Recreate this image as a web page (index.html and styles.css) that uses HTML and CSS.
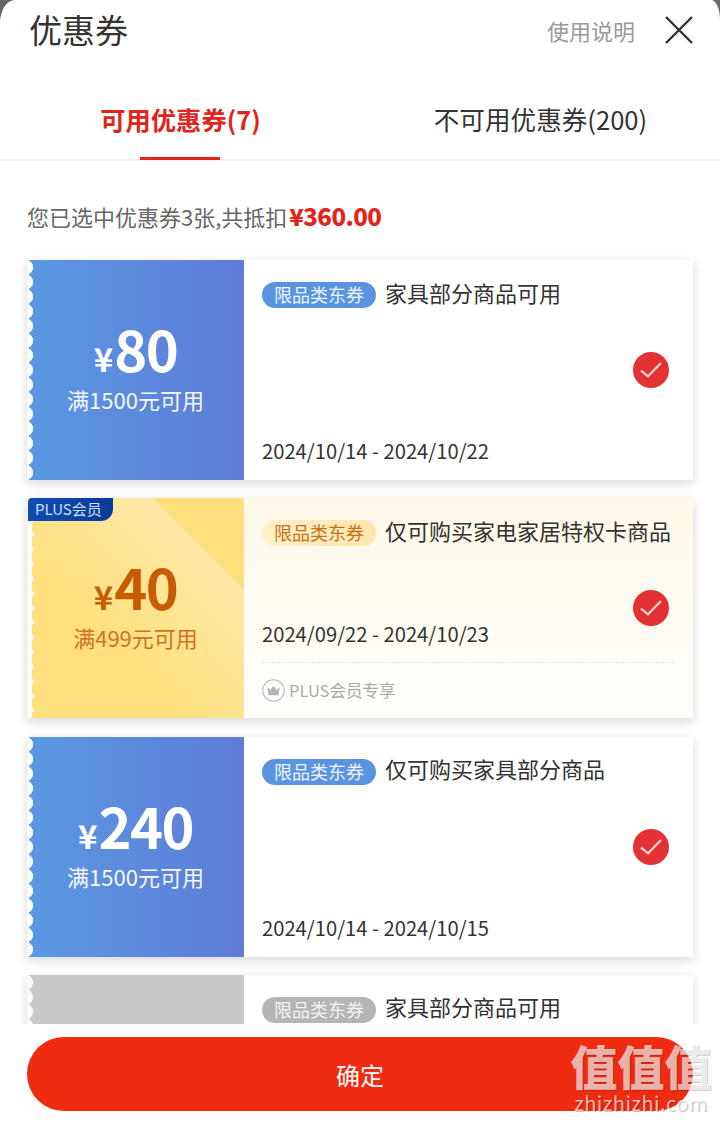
FILE: index.html
```html
<!DOCTYPE html>
<html lang="zh-CN">
<head>
<meta charset="utf-8">
<title>优惠券</title>
<link rel="stylesheet" href="styles.css">
</head>
<body>
<main class="sheet">
  <header class="header">
    <h1 class="title">优惠券</h1>
    <a class="help">使用说明</a>
    <svg class="close" viewBox="0 0 28 28" width="28" height="28"><path d="M1 1 27 27M27 1 1 27" fill="none" stroke="#333" stroke-width="2.4"/></svg>
  </header>
  <nav class="tabs">
    <div class="tab tab-active">可用优惠券(7)</div>
    <div class="tab">不可用优惠券(200)</div>
  </nav>
  <section class="list">
    <p class="summary">您已选中优惠券3张,共抵扣<strong class="summary-amount">¥360.00</strong></p>

    <article class="coupon">
      <div class="face face-blue">
        <div class="amount"><span class="yen">¥</span>80</div>
        <div class="limit">满1500元可用</div>
      </div>
      <div class="body">
        <div class="info">
          <div class="head"><span class="tag tag-blue">限品类东券</span><span class="name">家具部分商品可用</span></div>
          <div class="date">2024/10/14 - 2024/10/22</div>
        </div>
        <svg class="check" viewBox="0 0 36 36" width="36" height="36"><circle cx="18" cy="18" r="18" fill="#e33236"/><path d="M8 18.700l7 5.600L28 11" fill="none" stroke="#fbd5d5" stroke-width="2.200"/></svg>
      </div>
    </article>

    <article class="coupon coupon-plus">
      <div class="face face-gold">
        <span class="plus-badge">PLUS会员</span>
        <div class="amount"><span class="yen">¥</span>40</div>
        <div class="limit">满499元可用</div>
      </div>
      <div class="body">
        <div class="info">
          <div class="head"><span class="tag tag-gold">限品类东券</span><span class="name">仅可购买家电家居特权卡商品</span></div>
          <div class="date">2024/09/22 - 2024/10/23</div>
          <div class="plus-note">
            <svg class="crown" viewBox="0 0 22 22" width="23" height="23"><circle cx="11" cy="11" r="10.300" fill="#fff" stroke="#bbb" stroke-width="1"/><path d="M5 8l3.200 2.500L11 6.500l2.800 4L17 8l-1.300 7.500H6.300z" fill="#b5b5b5"/></svg>
            <span>PLUS会员专享</span>
          </div>
        </div>
        <svg class="check" viewBox="0 0 36 36" width="36" height="36"><circle cx="18" cy="18" r="18" fill="#e33236"/><path d="M8 18.700l7 5.600L28 11" fill="none" stroke="#fbd5d5" stroke-width="2.200"/></svg>
      </div>
    </article>

    <article class="coupon">
      <div class="face face-blue">
        <div class="amount"><span class="yen">¥</span>240</div>
        <div class="limit">满1500元可用</div>
      </div>
      <div class="body">
        <div class="info">
          <div class="head"><span class="tag tag-blue">限品类东券</span><span class="name">仅可购买家具部分商品</span></div>
          <div class="date">2024/10/14 - 2024/10/15</div>
        </div>
        <svg class="check" viewBox="0 0 36 36" width="36" height="36"><circle cx="18" cy="18" r="18" fill="#e33236"/><path d="M8 18.700l7 5.600L28 11" fill="none" stroke="#fbd5d5" stroke-width="2.200"/></svg>
      </div>
    </article>

    <article class="coupon">
      <div class="face face-gray"></div>
      <div class="body">
        <div class="info">
          <div class="head"><span class="tag tag-gray">限品类东券</span><span class="name">家具部分商品可用</span></div>
        </div>
      </div>
    </article>
  </section>
  <footer class="footer">
    <button class="confirm">确定</button>
  </footer>
  <div class="watermark">
    <div class="watermark-logo">值值值</div>
    <div class="watermark-url">zhizhizhi.com</div>
  </div>
</main>
</body>
</html>
```
FILE: styles.css
```css
* { box-sizing: border-box; }
html, body { margin: 0; height: 100%; }
body {
  background: #666;
  font-family: "Noto Sans CJK SC", "Noto Sans", sans-serif;
  color: #333;
}
.sheet {
  position: relative;
  height: 1123px;
  background: #fff;
  border-radius: 15px 9px 0 0 / 23px 20px 0 0;
  overflow: hidden;
  display: flex;
  flex-direction: column;
}
.header {
  height: 59px;
  padding: 0 27px 0 29px;
  display: flex;
  align-items: center;
  flex: none;
}
.title {
  margin: 0;
  font-size: 33px;
  font-weight: 400;
  line-height: 59px;
  color: #333;
  flex: 1;
}
.help {
  font-size: 22px;
  color: #999;
  margin-right: 30px;
}
.close { flex: none; }
.tabs {
  flex: none;
  height: 102px;
  border-bottom: 2px solid #f2f2f2;
  display: grid;
  grid-template-columns: 361px 1fr;
}
.tab {
  position: relative;
  text-align: center;
  font-size: 25.600px;
  line-height: 36px;
  padding-top: 42px;
  color: #333;
}
.tab-active {
  color: #e1251b;
  font-weight: 700;
  font-size: 25.300px;
}
.tab-active::after {
  content: "";
  position: absolute;
  left: 140px;
  bottom: -1px;
  width: 80px;
  height: 3px;
  background: #e1251b;
}
.list {
  flex: 1;
  min-height: 0;
  overflow: hidden;
  padding: 0 27px;
}
.summary {
  margin: 0;
  padding-top: 37px;
  height: 99px;
  font-size: 22px;
  line-height: 36px;
  color: #666;
}
.summary-amount {
  font-size: 24px;
  color: #e1251b;
  font-weight: 900;
  letter-spacing: -0.6px;
  margin-left: 2px;
}
.coupon {
  display: flex;
  height: 220px;
  margin-bottom: 18.330px;
  background: #fff;
  box-shadow: 0 3px 10px rgba(0, 0, 0, 0.16);
}
.coupon-plus { background: linear-gradient(#fff9ea, #fffefb); }
.face {
  position: relative;
  flex: none;
  width: 217px;
  display: flex;
  flex-direction: column;
  align-items: center;
  padding-top: 60px;
}
.face::before {
  content: "";
  position: absolute;
  left: 0;
  top: 0;
  bottom: 0;
  width: 7px;
  background: radial-gradient(circle at -1.700px 50%, #fbfaf4 7.600px, transparent 8px) 0 0 / 7px 14.670px repeat-y;
}
.face-blue { background: linear-gradient(90deg, #5a98e2, #5f7cd6); color: #fff; }
.face-gray { background: #c9c9c9; }
.face-gold {
  background: linear-gradient(45deg, #fee07f 0, #fee07f 110px, #fee9a6 244px, #fedf7c 244px);
  color: #c85c04;
}
.face-gold::before {
  background:
    radial-gradient(circle at 5px 50%, #fcfaf6 2px, transparent 2.500px) 0 0 / 7px 14.670px repeat-y,
    linear-gradient(90deg, #fcfaf6 5px, transparent 5px);
}
.amount {
  font-size: 56px;
  font-weight: 700;
  line-height: 56px;
  letter-spacing: -1.500px;
}
.yen {
  font-size: 33px;
  margin-right: 1px;
  letter-spacing: 0;
}
.limit {
  font-size: 22px;
  line-height: 26px;
  opacity: 0.95;
}
.face-gold .limit { color: #c9701a; }
.plus-badge {
  position: absolute;
  left: 1px;
  top: 0;
  width: 85px;
  height: 23px;
  background: linear-gradient(90deg, #0e4db0, #0a3a98);
  color: #cfe0fa;
  font-size: 15px;
  line-height: 22px;
  padding-left: 7px;
  border-radius: 4px 0 12px 0;
}
.body {
  flex: 1;
  display: grid;
  min-width: 0;
}
.info, .check { grid-area: 1 / 1; }
.info {
  padding: 22px 18px 0;
  display: flex;
  flex-direction: column;
}
.check {
  align-self: center;
  justify-self: end;
  margin-right: 24px;
}
.head {
  display: flex;
  align-items: center;
  gap: 10px;
  height: 26px;
  white-space: nowrap;
}
.tag {
  flex: none;
  width: 114px;
  height: 26px;
  border-radius: 13px;
  font-size: 18px;
  line-height: 25px;
  text-align: center;
}
.tag-blue { background: #5a94e0; color: #eef5ff; }
.tag-gold { background: linear-gradient(90deg, #fff0c8, #fde6ac); color: #c9701a; }
.tag-gray { background: #b5b5b5; color: #f2f2f2; }
.name {
  font-size: 22px;
  line-height: 26px;
  padding-bottom: 7px;
  margin-left: -1px;
  color: #333;
}
.date {
  margin-top: auto;
  padding-bottom: 14px;
  font-size: 20.200px;
  line-height: 30px;
  color: #333;
}
.coupon-plus .date { padding-bottom: 13px; margin-top: 73px; }
.plus-note {
  border-top: 1px dashed #e6e3da;
  display: flex;
  align-items: center;
  gap: 4px;
  height: 55px;
  margin-right: 1px;
  font-size: 16.500px;
  color: #aaa;
}
.crown { flex: none; }
.footer {
  position: relative;
  flex: none;
  height: 99px;
  padding: 13px 27px 12px;
  background: #fff;
}
.confirm {
  display: block;
  width: 100%;
  height: 74px;
  border: 0;
  border-radius: 37px;
  background: #ef2b11;
  color: #fff;
  font: 400 24px "Noto Sans CJK SC", sans-serif;
}
.watermark {
  position: absolute;
  left: 570px;
  top: 1037px;
  width: 142px;
  text-align: center;
  pointer-events: none;
}
.watermark-logo {
  font-size: 47px;
  font-weight: 900;
  line-height: 55px;
  white-space: nowrap;
  color: rgba(255, 255, 255, 0.68);
  text-shadow: 1px 1px 1px rgba(0, 0, 0, 0.22);
}
.watermark-url {
  font-size: 20px;
  line-height: 22px;
  letter-spacing: 0.5px;
  color: rgba(255, 255, 255, 0.7);
  text-shadow: 1px 1px 1px rgba(0, 0, 0, 0.28);
  white-space: nowrap;
}
```
